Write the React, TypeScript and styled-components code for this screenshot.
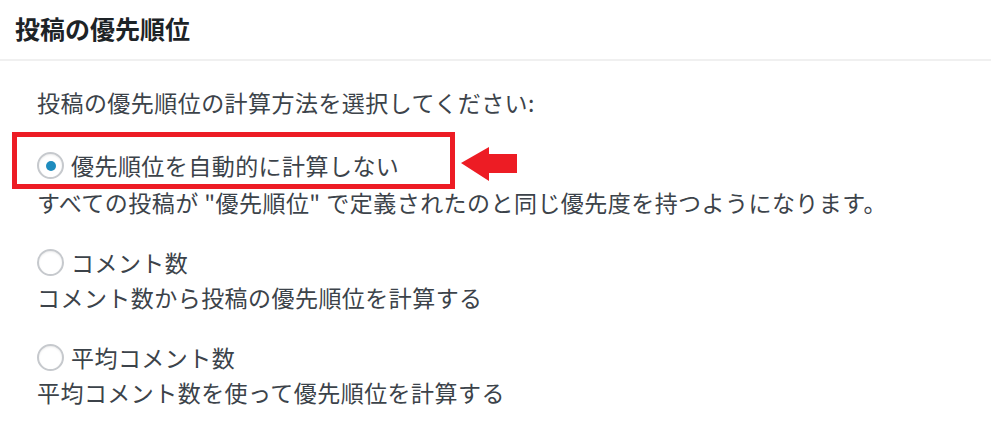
import React from 'react';
import styled, { createGlobalStyle } from 'styled-components';

const GlobalStyle = createGlobalStyle`
  * {
    box-sizing: border-box;
  }

  body {
    margin: 0;
    background: #ffffff;
    font-family: "Noto Sans CJK JP", "Noto Sans", sans-serif;
    color: #3c434a;
  }
`;

type Option = {
  id: string;
  label: string;
  description: string;
};

const options: Option[] = [
  {
    id: 'none',
    label: '優先順位を自動的に計算しない',
    description:
      'すべての投稿が "優先順位" で定義されたのと同じ優先度を持つようになります。',
  },
  {
    id: 'comments',
    label: 'コメント数',
    description: 'コメント数から投稿の優先順位を計算する',
  },
  {
    id: 'average',
    label: '平均コメント数',
    description: '平均コメント数を使って優先順位を計算する',
  },
];

export default function App() {
  const [selected, setSelected] = React.useState('none');

  return (
    <>
      <GlobalStyle />
      <Panel>
        <Header>
          <Title>投稿の優先順位</Title>
        </Header>
        <Body>
          <Intro>投稿の優先順位の計算方法を選択してください:</Intro>
          <OptionList>
            {options.map((option) => {
              const highlighted = option.id === 'none';
              return (
                <OptionItem key={option.id}>
                  <LabelRow $highlighted={highlighted}>
                    <Radio
                      type="radio"
                      name="priority"
                      checked={selected === option.id}
                      onChange={() => setSelected(option.id)}
                    />
                    <LabelText>{option.label}</LabelText>
                    {highlighted && (
                      <>
                        <HighlightBox />
                        <Arrow viewBox="0 0 56 34" width="56" height="34">
                          <polygon
                            points="0,16 28,0 28,7 56,7 56,26 28,26 28,34"
                            fill="#ed1c24"
                          />
                        </Arrow>
                      </>
                    )}
                  </LabelRow>
                  <Description>{option.description}</Description>
                </OptionItem>
              );
            })}
          </OptionList>
        </Body>
      </Panel>
    </>
  );
}

const Panel = styled.section`
  width: 100%;
`;

const Header = styled.header`
  height: 61px;
  padding-left: 15px;
  display: flex;
  align-items: center;
  border-bottom: 2px solid #f0f0f0;
`;

const Title = styled.h2`
  margin: 0 0 2px;
  font-size: 25px;
  font-weight: 700;
  color: #1d2327;
  line-height: 1;
`;

const Body = styled.div`
  padding: 24px 0 0 37px;
  font-size: 23px;
  line-height: 35px;
  letter-spacing: 0.45px;
`;

const Intro = styled.p`
  margin: 0 0 28px;
`;

const OptionList = styled.div`
  display: flex;
  flex-direction: column;
  gap: 25px;
`;

const OptionItem = styled.div`
  display: flex;
  flex-direction: column;
`;

const LabelRow = styled.label<{ $highlighted?: boolean }>`
  position: relative;
  display: flex;
  align-items: center;
  gap: 7px;
  height: 35px;
  margin-bottom: ${(p) => (p.$highlighted ? '2px' : '0')};
  cursor: pointer;
`;

const Radio = styled.input`
  appearance: none;
  margin: 0;
  width: 27px;
  height: 27px;
  border-radius: 50%;
  border: 2px solid #c6c9cd;
  box-shadow: inset 0 1px 2px rgba(0, 0, 0, 0.08);
  background: #ffffff;
  display: grid;
  place-items: center;
  flex-shrink: 0;

  &:checked::before {
    content: '';
    width: 10px;
    height: 10px;
    border-radius: 50%;
    background: #1e8cbe;
  }
`;

const LabelText = styled.span``;

const HighlightBox = styled.span`
  position: absolute;
  top: -16px;
  left: -25px;
  width: 443px;
  height: 57px;
  border: 5px solid #ed1c24;
  pointer-events: none;
`;

const Arrow = styled.svg`
  position: absolute;
  top: -1px;
  left: 424px;
`;

const Description = styled.p`
  margin: 0;
`;
